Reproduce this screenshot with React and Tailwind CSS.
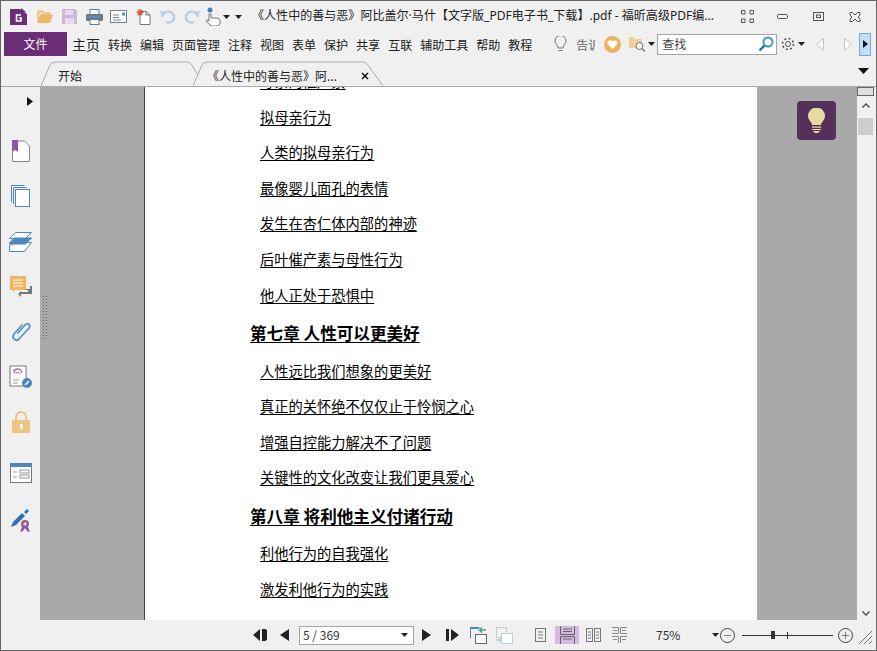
import { Minus, Plus } from "lucide-react";

const uiFont = "[font-family:'Noto_Sans_CJK_SC','Noto_Sans',sans-serif]";

const menus = ["转换", "编辑", "页面管理", "注释", "视图", "表单", "保护", "共享", "互联", "辅助工具", "帮助", "教程"];

function Caret({ className = "" }) {
  return (
    <svg width="7" height="4" viewBox="0 0 7 4" className={className}>
      <path d="M0 0h7L3.5 4z" fill="#222" />
    </svg>
  );
}

function Logo() {
  return (
    <svg width="17" height="17" viewBox="0 0 17 17">
      <path d="M0 1h10l7 5v11H0z" fill="#6b2d75" />
      <path d="M11 0l5 4h-5z" fill="#6b2d75" />
      <path d="M11 7H6.5v6H11v-3H9" fill="none" stroke="#fff" strokeWidth="1.6" />
    </svg>
  );
}

function Folder() {
  return (
    <svg width="17" height="14" viewBox="0 0 17 14">
      <path d="M1 1h5l1 2h6v2H4L1 13z" fill="#f2d9a8" stroke="#e3b263" />
      <path d="M4 5h12l-3 8H1z" fill="#eeb667" />
    </svg>
  );
}

function Save() {
  return (
    <svg width="15" height="15" viewBox="0 0 15 15">
      <path d="M0 0h13l2 2v13H0z" fill="#cdb6d8" />
      <rect x="3" y="1" width="8" height="5" fill="#e8dcec" />
      <rect x="3" y="9" width="9" height="6" fill="#e8dcec" />
    </svg>
  );
}

function Printer() {
  return (
    <svg width="17" height="16" viewBox="0 0 17 16">
      <rect x="4" y="0.5" width="9" height="5" fill="#fff" stroke="#6d7b88" />
      <rect x="0" y="5" width="17" height="7" rx="1" fill="#6d7b88" />
      <rect x="3" y="7" width="11" height="1.5" fill="#4f94cf" />
      <rect x="4" y="10.5" width="9" height="5" fill="#fff" stroke="#6d7b88" />
    </svg>
  );
}

function Mail() {
  return (
    <svg width="17" height="13" viewBox="0 0 17 13">
      <rect x="0.5" y="0.5" width="16" height="12" fill="#fff" stroke="#77828c" />
      <path d="M3 5h6M3 7.5h6M3 10h8" stroke="#77828c" />
      <rect x="12" y="2.5" width="3" height="3" fill="#4f94cf" />
    </svg>
  );
}

function NewDoc() {
  return (
    <svg width="15" height="16" viewBox="0 0 15 16">
      <path d="M4 2.5h6l4 3.5v9.5H4z" fill="#fff" stroke="#777" />
      <path d="M10 2.5v3.5h4" fill="none" stroke="#777" />
      <path d="M4 0v7M0.5 3.5h7M1.5 1l5 5M6.5 1l-5 5" stroke="#e2532a" strokeWidth="1.2" />
    </svg>
  );
}

function Turn({ flip }) {
  return (
    <svg width="16" height="15" viewBox="0 0 16 15" className={flip ? "-scale-x-100" : ""}>
      <path d="M4 5a5.5 5.5 0 1 1 2 8" fill="none" stroke="#b8cfe4" strokeWidth="2.4" />
      <path d="M0 2l7 1-5 6z" fill="#b8cfe4" />
    </svg>
  );
}

function Hand() {
  return (
    <svg width="16" height="19" viewBox="0 0 16 19">
      <circle cx="5" cy="3" r="2.5" fill="#3f7fbf" />
      <path d="M4 7h2v4h7l2 2v4l-2 2H6l-5-5 1-1 2 1z" fill="#fff" stroke="#777" />
    </svg>
  );
}

function WinButtons() {
  return (
    <div className="flex items-center">
      <svg width="13" height="13" viewBox="0 0 13 13" className="ml-[6px]">
        <path d="M.5.5h3.5v3.5H.5zM9 .5h3.5v3.5H9zM.5 9h3.5v3.5H.5zM9 9h3.5v3.5H9z" fill="none" stroke="#555" />
      </svg>
      <svg width="11" height="5" viewBox="0 0 11 5" className="ml-[23px]">
        <rect x="0.5" y="0.5" width="10" height="4" rx="1" fill="none" stroke="#555" />
      </svg>
      <svg width="11" height="9" viewBox="0 0 11 9" className="ml-[25px]">
        <rect x="0.5" y="0.5" width="10" height="8" fill="none" stroke="#555" />
        <rect x="3.5" y="3" width="4" height="2.5" fill="none" stroke="#555" />
      </svg>
      <svg width="12" height="10" viewBox="0 0 12 10" className="ml-[25px]">
        <path d="M1 .5h2.5L6 3l2.5-2.5H11V3L9 5l2 2v2.5H8.500L6 7 3.500 9.500H1V7l2-2-2-2z" fill="none" stroke="#555" />
      </svg>
    </div>
  );
}

function TitleBar() {
  return (
    <div className="flex h-[29px] items-center pl-[9px] pt-[2px]">
      <Logo />
      <div className="ml-[10px]"><Folder /></div>
      <div className="ml-[8px]"><Save /></div>
      <div className="ml-[9px]"><Printer /></div>
      <div className="ml-[7px]"><Mail /></div>
      <div className="ml-[9px]"><NewDoc /></div>
      <div className="ml-[9px]"><Turn /></div>
      <div className="ml-[8px]"><Turn flip /></div>
      <div className="ml-[5px]"><Hand /></div>
      <Caret className="ml-[2px]" />
      <Caret className="ml-[5px]" />
      <span className="ml-[10px] w-[465px] whitespace-nowrap font-['Noto_Sans','Noto_Sans_CJK_SC',sans-serif] text-[12.05px] text-[#222]">
        《人性中的善与恶》阿比盖尔·马什【文字版_PDF电子书_下载】.pdf - 福昕高级PDF编...
      </span>
      <div className="ml-[18px]"><WinButtons /></div>
    </div>
  );
}

function MenuBar() {
  return (
    <div className="flex h-[28px] items-center pl-[3px]">
      <div className="flex h-[24px] w-[63px] items-center justify-center bg-[#6b2d75] text-[12px] text-white">文件</div>
      <span className="ml-[5px] w-[28px] pt-px text-[14px] text-[#222]">主页</span>
      <div className="ml-[8px] flex gap-[8px] pt-px text-[12px] text-[#222]">
        {menus.map((m) => (
          <span key={m} className="whitespace-nowrap">{m}</span>
        ))}
      </div>
      <svg width="13" height="17" viewBox="0 0 13 17" className="ml-[22px]">
        <path d="M4 12c0-3-3-4-3-7a5.500 5.500 0 0 1 11 0c0 3-3 4-3 7z" fill="none" stroke="#777" />
        <path d="M4.500 14.500h4" stroke="#777" />
      </svg>
      <span className="ml-[9px] w-[19px] overflow-hidden whitespace-nowrap pt-px text-[12px] text-[#666]">告诉</span>
      <svg width="17" height="17" viewBox="0 0 17 17" className="ml-[9px]">
        <circle cx="8.500" cy="8.500" r="8.500" fill="#ecb25f" />
        <path d="M8.500 13L4 8.500a2.600 2.600 0 0 1 4.500-3 2.600 2.600 0 0 1 4.500 3z" fill="#fff" />
      </svg>
      <svg width="17" height="17" viewBox="0 0 17 17" className="ml-[8px]">
        <path d="M0 1h5l1 2h7v9H0z" fill="#f0cf9b" />
        <circle cx="10.500" cy="10" r="3.500" fill="#f0f0f0" stroke="#777" />
        <path d="M13 12.500l3 3" stroke="#777" strokeWidth="1.400" />
      </svg>
      <Caret className="ml-[2px]" />
      <div className="ml-[2px] flex h-[21px] w-[120px] items-center justify-between border border-[#a5a5a5] bg-white pl-[4px] pr-[2px] text-[12px] text-[#444]">
        <span>查找</span>
        <svg width="16" height="16" viewBox="0 0 16 16">
          <circle cx="10" cy="6" r="4.500" fill="none" stroke="#3d9bc3" strokeWidth="2" />
          <path d="M6.500 9.500L1.500 14.500" stroke="#2b6ca8" strokeWidth="2.400" />
        </svg>
      </div>
      <svg width="14" height="14" viewBox="0 0 14 14" className="ml-[4px]">
        <circle cx="7" cy="7" r="2.500" fill="none" stroke="#555" />
        <circle cx="7" cy="7" r="5.500" fill="none" stroke="#555" strokeWidth="1.600" strokeDasharray="2 2.300" />
      </svg>
      <Caret className="ml-[3px]" />
      <svg width="8" height="13" viewBox="0 0 8 13" className="ml-[11px]">
        <path d="M7.500 .5v12L.5 6.500z" fill="#fff" stroke="#c0c0c0" />
      </svg>
      <svg width="8" height="13" viewBox="0 0 8 13" className="ml-[20px]">
        <path d="M.5 .5v12l7-6z" fill="#fff" stroke="#c0c0c0" />
      </svg>
      <div className="ml-[7px] flex h-[23px] w-[12px] items-center justify-center border border-[#7ea6cc] bg-[#bfdfff]">
        <svg width="5" height="8" viewBox="0 0 5 8"><path d="M0 0l5 4-5 4z" fill="#111" /></svg>
      </div>
    </div>
  );
}

function Tab({ width, label, active, labelClass }) {
  return (
    <div className={`relative flex h-[26px] items-center pt-[6px] text-[12px] text-[#222] ${width}`}>
      <svg className="absolute inset-0 h-full w-full" viewBox={active ? "0 0 191 26" : "0 0 156 26"} preserveAspectRatio="none">
        {active ? (
          <path d="M0 26L9 5Q11 2 14 2H170Q173 2 175 5L190 26" fill="none" stroke="#aaa" />
        ) : (
          <path d="M0 26L9 5Q11 2 14 2H146Q149 2 151 5L156 14" fill="none" stroke="#aaa" />
        )}
      </svg>
      <span className={`relative whitespace-nowrap ${labelClass}`}>{label}</span>
      {active && (
        <svg width="8" height="8" viewBox="0 0 8 8" className="relative ml-[24px]">
          <path d="M1 1l6 6M7 1l-6 6" stroke="#111" strokeWidth="1.500" />
        </svg>
      )}
    </div>
  );
}

function TabBar() {
  return (
    <div className="flex h-[29px] items-end border-b border-[#a9a9a9] pl-[40px]">
      <Tab width="w-[156px]" label="开始" labelClass="pl-[17px]" />
      <div className="-ml-[4px]">
        <Tab width="w-[191px]" label="《人性中的善与恶》阿..." labelClass="pl-[14px]" active />
      </div>
      <svg width="11" height="6" viewBox="0 0 11 6" className="mb-[12px] ml-[474px]">
        <path d="M0 0h11L5.500 6z" fill="#111" />
      </svg>
    </div>
  );
}

function SideIcon({ h, children }) {
  return <div className={`flex w-full items-center justify-center ${h}`}>{children}</div>;
}

function Sidebar() {
  return (
    <div className="flex w-[39px] shrink-0 flex-col bg-[#f0f0f0]">
      <div className="flex h-[28px] items-center justify-end pr-[7px]">
        <svg width="6" height="9" viewBox="0 0 6 9"><path d="M0 0l6 4.500L0 9z" fill="#111" /></svg>
      </div>
      <SideIcon h="h-[13px]" />
      <SideIcon h="h-[45px]">
        <svg width="18" height="22" viewBox="0 0 18 22">
          <path d="M.5 1h12l5 5v15.500H.500z" fill="#fff" stroke="#888" />
          <path d="M0 0h6v12l-3-2-3 2z" fill="#8d57a8" />
        </svg>
      </SideIcon>
      <SideIcon h="h-[46px]">
        <svg width="19" height="22" viewBox="0 0 19 22" fill="none" stroke="#4e86bf">
          <path d="M.5 17V.5h13M2.500 19V2.500h13" />
          <rect x="4.500" y="4.500" width="14" height="17" fill="#fff" />
        </svg>
      </SideIcon>
      <SideIcon h="h-[45px]">
        <svg width="23" height="20" viewBox="0 0 23 20" stroke="#4e86bf">
          <path d="M7 .5h15.500l-6 6H.5z" fill="#fff" />
          <path d="M.5 13.500l6-3h16l-7 9H.5z" fill="#fff" />
          <path d="M.5 11l5-5h17l-6 6H.5z" fill="#4e86bf" />
        </svg>
      </SideIcon>
      <SideIcon h="h-[45px]">
        <svg width="22" height="22" viewBox="0 0 22 22">
          <path d="M7 13h13v-3h2v8H11v3l-3-3 3-3v1h7v-2H7z" fill="#777" />
          <path d="M0 0h16v14H5l-2 3v-3H0z" fill="#efb560" />
          <path d="M3 4h10M3 7h10M3 10h10" stroke="#fff" />
        </svg>
      </SideIcon>
      <SideIcon h="h-[45px]">
        <svg width="20" height="22" viewBox="0 0 20 22">
          <path d="M7 12l7-8c3-3 6 0 4 3L8 18c-3 3-8-1-5-5l8-9" fill="none" stroke="#5b93c9" strokeWidth="1.800" strokeLinecap="round" />
        </svg>
      </SideIcon>
      <SideIcon h="h-[45px]">
        <svg width="23" height="23" viewBox="0 0 23 23">
          <rect x="1" y="1" width="16" height="20" fill="#fff" stroke="#777" />
          <path d="M5 8a4 4 0 0 1 8 0M7 9a2 2 0 0 1 4 0M4 6c2-3 7-3 9 0" fill="none" stroke="#a06bb8" />
          <path d="M4 15h6M4 18h5" stroke="#999" />
          <circle cx="18" cy="18" r="5" fill="#4e86bf" />
          <path d="M16 20l4-4" stroke="#fff" strokeWidth="1.500" />
        </svg>
      </SideIcon>
      <SideIcon h="h-[45px]">
        <svg width="18" height="22" viewBox="0 0 18 22">
          <path d="M4 10V6a5 5 0 0 1 10 0v4" fill="none" stroke="#edc483" strokeWidth="2" />
          <rect x="0" y="9" width="18" height="13" rx="1" fill="#edc483" />
          <rect x="8" y="13" width="2.500" height="5" fill="#fff" />
        </svg>
      </SideIcon>
      <SideIcon h="h-[58px]">
        <svg width="22" height="20" viewBox="0 0 22 20">
          <rect x=".5" y=".5" width="21" height="19" fill="#fff" stroke="#777" />
          <rect width="22" height="4" fill="#4e86bf" />
          <path d="M3 9h4M3 14h4" stroke="#999" />
          <rect x="10" y="7" width="9" height="3" fill="none" stroke="#999" />
          <rect x="10" y="12" width="9" height="3" fill="none" stroke="#999" />
        </svg>
      </SideIcon>
      <SideIcon h="h-[37px]">
        <svg width="20" height="24" viewBox="0 0 20 24">
          <path d="M0 18l2-5 9-9 3 3-9 9z" fill="#2f72b5" />
          <path d="M13 3l3-3 2 2-3 3z" fill="#2f72b5" />
          <circle cx="14" cy="15" r="4" fill="#8d57a8" />
          <circle cx="14" cy="15" r="1.800" fill="#f0d87a" />
          <path d="M11 18l-2 5 3-1 2-3 2 3 3 1-2-5" fill="#8d57a8" />
        </svg>
      </SideIcon>
    </div>
  );
}

const rows = [
  { t: "母亲的催产素" },
  { t: "拟母亲行为" },
  { t: "人类的拟母亲行为" },
  { t: "最像婴儿面孔的表情" },
  { t: "发生在杏仁体内部的神迹" },
  { t: "后叶催产素与母性行为" },
  { t: "他人正处于恐惧中" },
  { t: "第七章 人性可以更美好", head: true },
  { t: "人性远比我们想象的更美好" },
  { t: "真正的关怀绝不仅仅止于怜悯之心" },
  { t: "增强自控能力解决不了问题" },
  { t: "关键性的文化改变让我们更具爱心" },
  { t: "第八章 将利他主义付诸行动", head: true },
  { t: "利他行为的自我强化" },
  { t: "激发利他行为的实践" },
];

function PageView() {
  return (
    <div className="flex min-w-0 flex-1 overflow-hidden bg-[#a9a9a9]">
      <div className="w-[104px] shrink-0 pl-[3px] pt-[209px]">
        <svg width="4" height="43" viewBox="0 0 4 43">
          <defs>
            <pattern id="grip" width="3" height="3" patternUnits="userSpaceOnUse">
              <rect width="1" height="1" fill="#666" />
            </pattern>
          </defs>
          <rect width="4" height="43" fill="url(#grip)" />
        </svg>
      </div>
      <div className="w-[613px] shrink-0 overflow-hidden border-l border-[#444] bg-white pl-[105px]">
        <div className="-mt-[24px] flex flex-col font-['Noto_Sans_CJK_SC','Noto_Sans',sans-serif] text-black">
          {rows.map((r) =>
            r.head ? (
              <div key={r.t} className="flex h-[40.4px] items-center pt-[2px] text-[16.6px] font-bold">
                <span className="underline underline-offset-[2px]">{r.t}</span>
              </div>
            ) : (
              <div key={r.t} className="flex h-[35.6px] items-center pl-[10px] text-[14.27px]">
                <span className="underline underline-offset-[2px]">{r.t}</span>
              </div>
            )
          )}
        </div>
      </div>
      <div className="flex-1 pl-[40px] pt-[14px]">
        <div className="flex h-[39px] w-[39px] items-center justify-center rounded-[4px] bg-[#55305a]">
          <svg width="17" height="25" viewBox="0 0 17 25">
            <path d="M4 17c0-3-4-5-4-9a8.500 8.500 0 0 1 17 0c0 4-4 6-4 9z" fill="#e6dca0" />
            <path d="M4 18.500h9v1.200H4zM4 21h9v1H4z" fill="#e6dca0" />
            <path d="M5 23h7l-2 2H7z" fill="#e6dca0" />
          </svg>
        </div>
      </div>
      <div className="flex w-[17px] shrink-0 flex-col items-center bg-[#f0f0f0]">
        <div className="h-[9px] w-[17px] border border-[#666] bg-[#e0e0e0]" />
        <svg width="8" height="5" viewBox="0 0 8 5" className="mt-[7px]">
          <path d="M.5 4.500L4 1l3.500 3.500" fill="none" stroke="#555" strokeWidth="1.500" />
        </svg>
        <div className="mt-[10px] h-[17px] w-[15px] bg-[#cdcdcd]" />
        <div className="flex-1" />
        <svg width="8" height="5" viewBox="0 0 8 5" className="mb-[4px]">
          <path d="M.5 .5L4 4 7.500 .5" fill="none" stroke="#555" strokeWidth="1.500" />
        </svg>
      </div>
      <div className="w-[2px] shrink-0 bg-[#f0f0f0]" />
    </div>
  );
}

function StatusBar() {
  return (
    <div className="flex h-[30px] items-center bg-[#f0f0f0] pl-[252px] text-[12px]">
      <svg width="14" height="12" viewBox="0 0 14 12"><path d="M7 0v12L0 6zM9 0h3v12H9zM12 0l2 1v10l-2 1z" fill="#222" /></svg>
      <svg width="9" height="12" viewBox="0 0 9 12" className="ml-[13px]"><path d="M9 0v12L0 6z" fill="#222" /></svg>
      <div className="ml-[10px] flex h-[19px] w-[115px] items-center justify-between border border-[#a5a5a5] bg-white pl-[3px] pr-[5px] text-[#333]">
        <span>5 / 369</span>
        <Caret />
      </div>
      <svg width="9" height="12" viewBox="0 0 9 12" className="ml-[8px]"><path d="M0 0v12l9-6z" fill="#222" /></svg>
      <svg width="13" height="12" viewBox="0 0 13 12" className="ml-[15px]"><path d="M0 0h3v12H0zM5 0v12l8-6z" fill="#222" /></svg>
      <svg width="17" height="17" viewBox="0 0 17 17" className="ml-[11px]">
        <path d="M.5 11V.5h9" fill="none" stroke="#4e86bf" />
        <rect x="0" y="0" width="9" height="2" fill="#4e86bf" />
        <rect x="5.500" y="7.500" width="11" height="9" fill="#fff" stroke="#666" />
        <path d="M16 3h-6M12 .5L9.500 3 12 5.500" fill="none" stroke="#4f9a8a" strokeWidth="1.500" />
      </svg>
      <svg width="17" height="17" viewBox="0 0 17 17" className="ml-[9px]">
        <rect x=".5" y=".5" width="10" height="10" fill="none" stroke="#ccc" />
        <rect x="5.500" y="6.500" width="11" height="10" fill="#fff" stroke="#b9cfe0" />
        <path d="M0 13h5M3 11l2 2-2 2" fill="none" stroke="#b5d3cc" strokeWidth="1.500" />
      </svg>
      <svg width="11" height="14" viewBox="0 0 11 14" className="ml-[22px]" fill="none" stroke="#777">
        <rect x=".5" y=".5" width="10" height="13" />
        <path d="M3 4h5M3 7h5M3 10h5" />
      </svg>
      <div className="ml-[9px] flex h-[18px] w-[24px] items-center justify-center bg-[#d6b9e3]">
        <svg width="15" height="18" viewBox="0 0 15 18" fill="none" stroke="#666">
          <path d="M.5 0v8.500h14V0M3 3h9M3 5.500h9" />
          <path d="M.5 18v-7.500h14V18M3 13h9" />
        </svg>
      </div>
      <svg width="15" height="14" viewBox="0 0 15 14" className="ml-[7px]" fill="none" stroke="#777">
        <rect x=".5" y=".5" width="6" height="13" />
        <rect x="8.500" y=".5" width="6" height="13" />
        <path d="M2 4h3M2 7h3M2 10h3M10 4h3M10 7h3M10 10h3" />
      </svg>
      <svg width="15" height="16" viewBox="0 0 15 16" className="ml-[11px]" fill="none" stroke="#888">
        <path d="M0 .5h6.500v6H0M15 .5H8.500v6H15M0 9.500h6.500V16M15 9.500H8.500V16M1 3.500h4M10 3.500h4M1 12.500h4M10 12.500h4" />
      </svg>
      <span className="ml-[29px] w-[27px] text-[#333]">75%</span>
      <Caret className="ml-[29px]" />
      <div className="ml-[1px] flex h-[15px] w-[15px] items-center justify-center rounded-full border border-[#444]">
        <Minus size={11} strokeWidth={1.4} color="#444" />
      </div>
      <div className="relative ml-[7px] h-px w-[91px] bg-[#333]">
        <div className="absolute -top-[4px] left-[29px] h-[8px] w-[4px] bg-[#333]" />
        <div className="absolute -top-[3px] left-[45px] h-[7px] w-px bg-[#333]" />
      </div>
      <div className="ml-[5px] flex h-[15px] w-[15px] items-center justify-center rounded-full border border-[#444]">
        <Plus size={11} strokeWidth={1.4} color="#444" />
      </div>
      <svg width="13" height="13" viewBox="0 0 13 13" className="ml-[6px] mt-[4px]">
        <path d="M0 13L13 0M5 13l8-8M10 13l3-3" stroke="#777" />
      </svg>
    </div>
  );
}

export default function App() {
  return (
    <div className={`flex h-[651px] w-[877px] flex-col overflow-hidden border border-[#666] bg-[#f0f0f0] ${uiFont}`}>
      <TitleBar />
      <MenuBar />
      <TabBar />
      <div className="flex min-h-0 flex-1">
        <Sidebar />
        <PageView />
      </div>
      <StatusBar />
    </div>
  );
}
